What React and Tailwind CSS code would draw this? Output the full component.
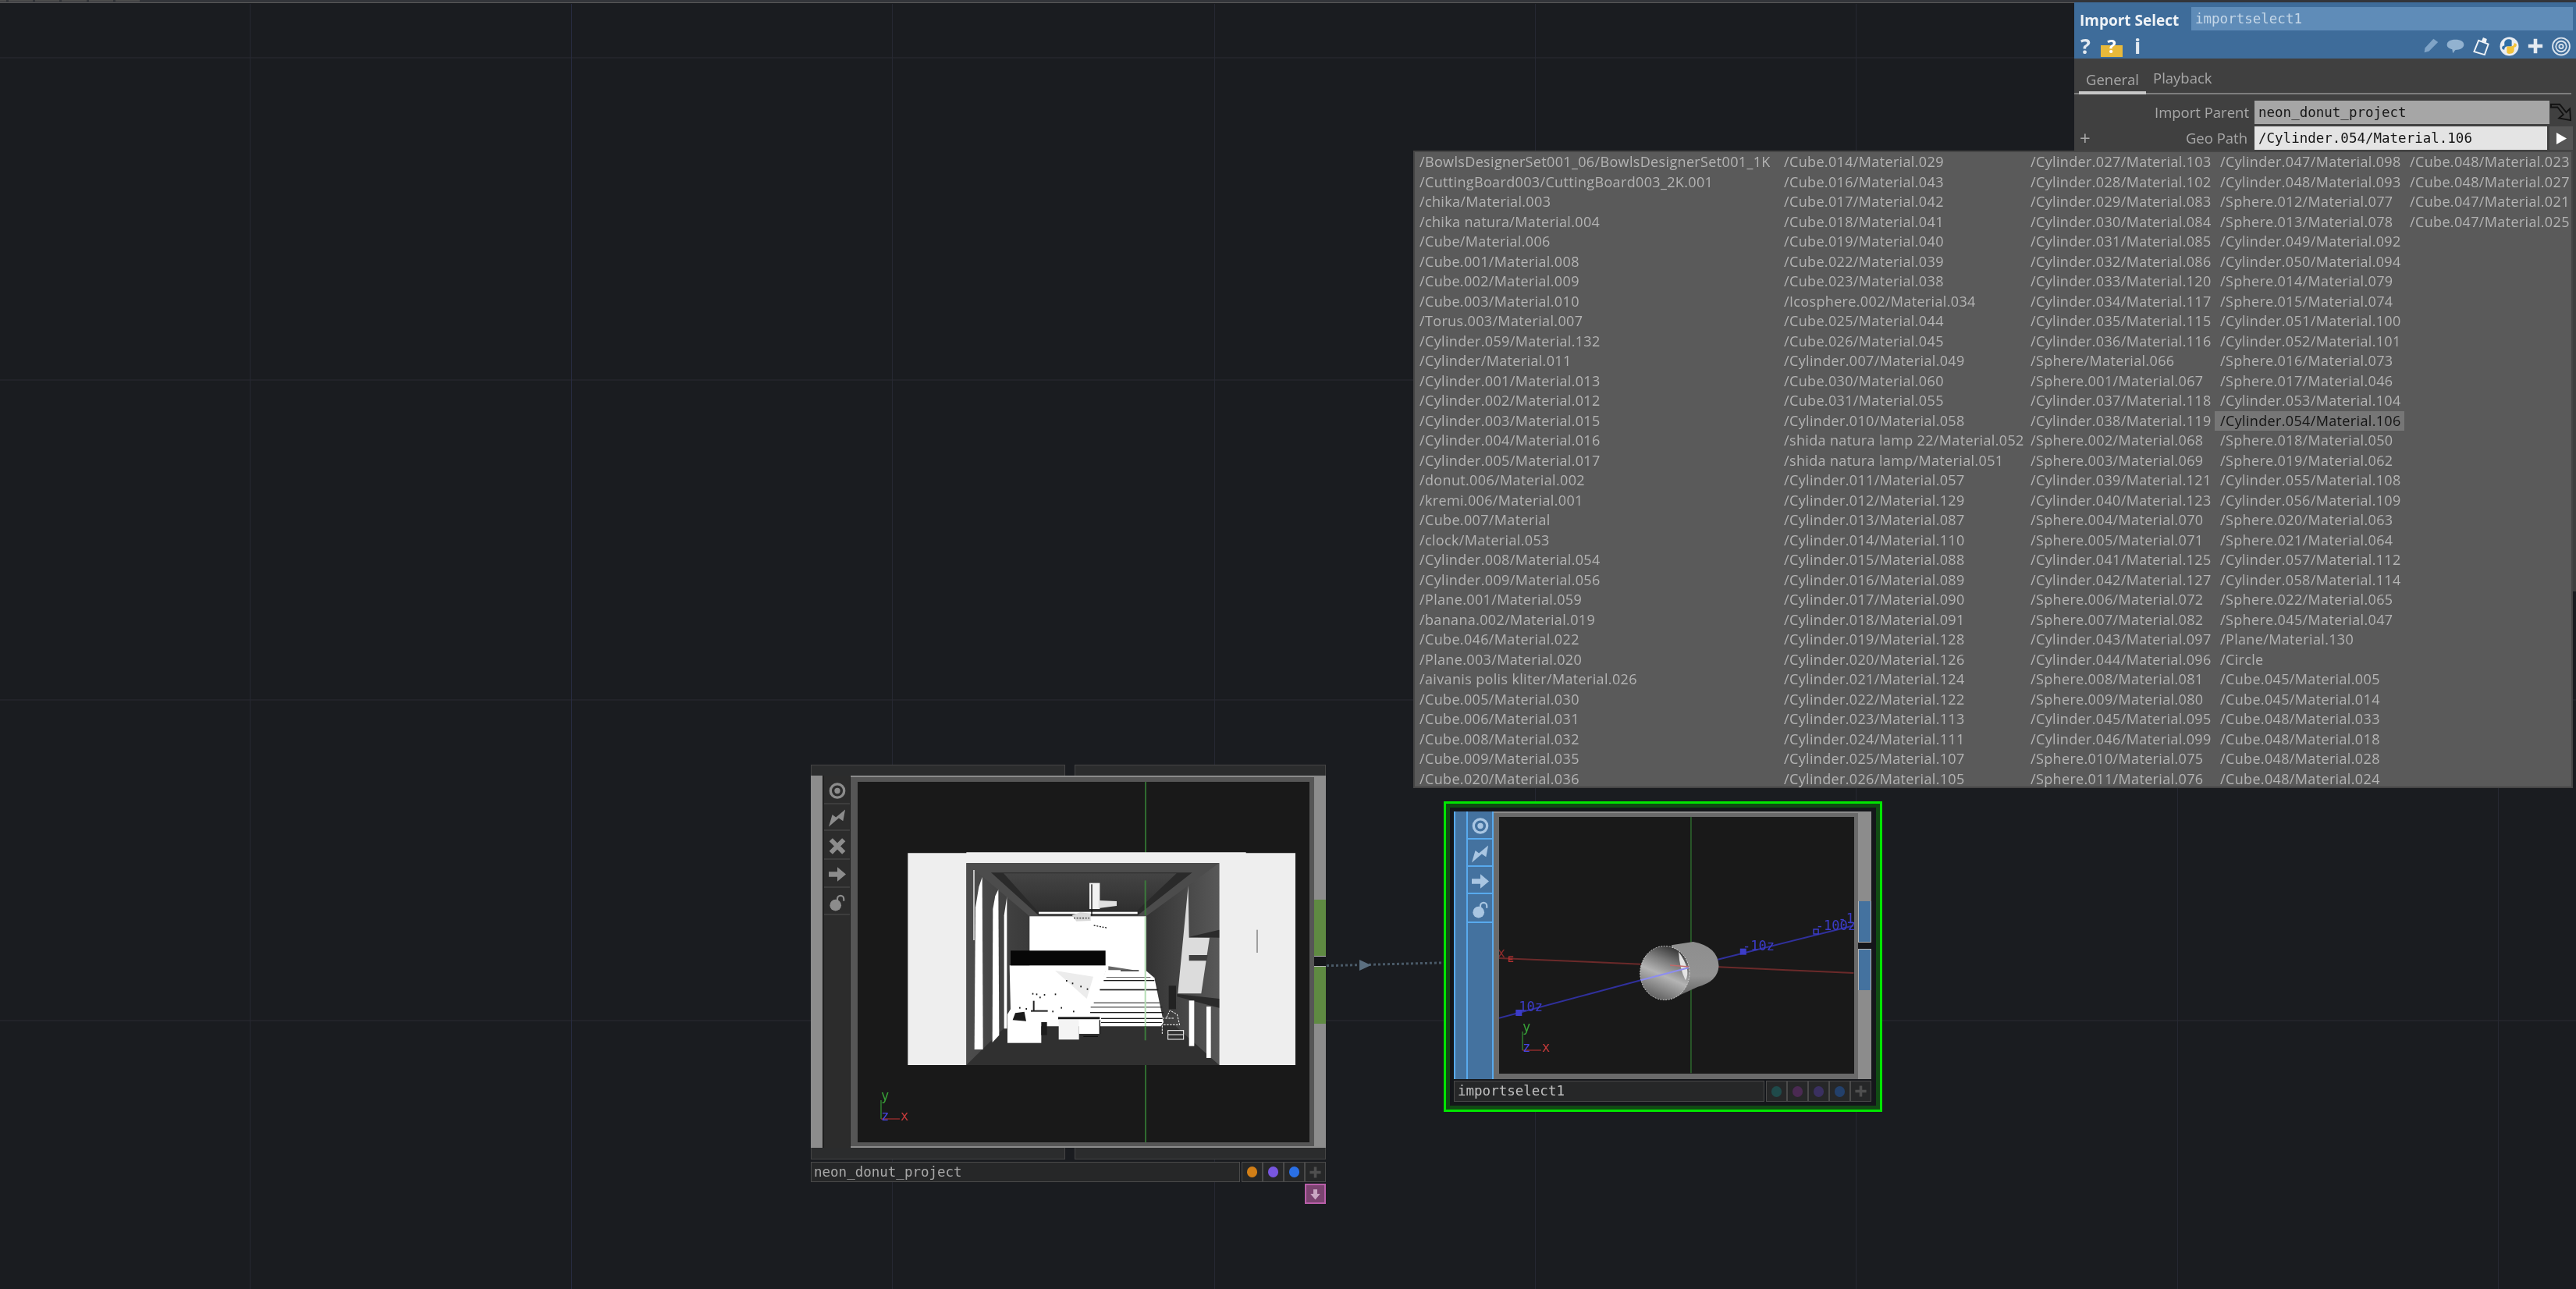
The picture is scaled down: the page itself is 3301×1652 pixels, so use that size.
import React from "react";

const SANS = "font-['Open_Sans',sans-serif]";
const MONO = "font-['DejaVu_Sans_Mono',monospace]";

const cyl = (n, m) => `/Cylinder.${n}/Material.${m}`;
const cub = (n, m) => `/Cube.${n}/Material.${m}`;
const sph = (n, m) => `/Sphere.${n}/Material.${m}`;

const COL1 = [
  "/BowlsDesignerSet001_06/BowlsDesignerSet001_1K", "/CuttingBoard003/CuttingBoard003_2K.001", "/chika/Material.003",
  "/chika natura/Material.004", "/Cube/Material.006", cub("001", "008"), cub("002", "009"), cub("003", "010"),
  "/Torus.003/Material.007", cyl("059", "132"), "/Cylinder/Material.011", cyl("001", "013"), cyl("002", "012"),
  cyl("003", "015"), cyl("004", "016"), cyl("005", "017"), "/donut.006/Material.002", "/kremi.006/Material.001",
  "/Cube.007/Material", "/clock/Material.053", cyl("008", "054"), cyl("009", "056"), "/Plane.001/Material.059",
  "/banana.002/Material.019", cub("046", "022"), "/Plane.003/Material.020", "/aivanis polis kliter/Material.026",
  cub("005", "030"), cub("006", "031"), cub("008", "032"), cub("009", "035"), cub("020", "036"),
];
const COL2 = [
  cub("014", "029"), cub("016", "043"), cub("017", "042"), cub("018", "041"), cub("019", "040"), cub("022", "039"),
  cub("023", "038"), "/Icosphere.002/Material.034", cub("025", "044"), cub("026", "045"), cyl("007", "049"),
  cub("030", "060"), cub("031", "055"), cyl("010", "058"), "/shida natura lamp 22/Material.052",
  "/shida natura lamp/Material.051", cyl("011", "057"), cyl("012", "129"), cyl("013", "087"), cyl("014", "110"),
  cyl("015", "088"), cyl("016", "089"), cyl("017", "090"), cyl("018", "091"), cyl("019", "128"), cyl("020", "126"),
  cyl("021", "124"), cyl("022", "122"), cyl("023", "113"), cyl("024", "111"), cyl("025", "107"), cyl("026", "105"),
];
const COL3 = [
  cyl("027", "103"), cyl("028", "102"), cyl("029", "083"), cyl("030", "084"), cyl("031", "085"), cyl("032", "086"),
  cyl("033", "120"), cyl("034", "117"), cyl("035", "115"), cyl("036", "116"), "/Sphere/Material.066", sph("001", "067"),
  cyl("037", "118"), cyl("038", "119"), sph("002", "068"), sph("003", "069"), cyl("039", "121"), cyl("040", "123"),
  sph("004", "070"), sph("005", "071"), cyl("041", "125"), cyl("042", "127"), sph("006", "072"), sph("007", "082"),
  cyl("043", "097"), cyl("044", "096"), sph("008", "081"), sph("009", "080"), cyl("045", "095"), cyl("046", "099"),
  sph("010", "075"), sph("011", "076"),
];
const COL4 = [
  cyl("047", "098"), cyl("048", "093"), sph("012", "077"), sph("013", "078"), cyl("049", "092"), cyl("050", "094"),
  sph("014", "079"), sph("015", "074"), cyl("051", "100"), cyl("052", "101"), sph("016", "073"), sph("017", "046"),
  cyl("053", "104"), cyl("054", "106"), sph("018", "050"), sph("019", "062"), cyl("055", "108"), cyl("056", "109"),
  sph("020", "063"), sph("021", "064"), cyl("057", "112"), cyl("058", "114"), sph("022", "065"), sph("045", "047"),
  "/Plane/Material.130", "/Circle", cub("045", "005"), cub("045", "014"), cub("048", "033"), cub("048", "018"),
  cub("048", "028"), cub("048", "024"),
];
const COL5 = [cub("048", "023"), cub("048", "027"), cub("047", "021"), cub("047", "025")];

const SELECTED = cyl("054", "106");

function MenuColumn({ items, className }) {
  return (
    <div className={`flex flex-col ${className}`}>
      {items.map((t) =>
        t === SELECTED ? (
          <div key={t} className="h-[25.5px] -ml-[7px] w-[243px] pl-[7px] flex items-center bg-[#767676] text-[#141414] whitespace-nowrap">{t}</div>
        ) : (
          <div key={t} className="h-[25.5px] flex items-center whitespace-nowrap">{t}</div>
        )
      )}
    </div>
  );
}

function TargetIcon({ className }) {
  return (
    <svg viewBox="0 0 24 24" className={className}>
      <circle cx="12" cy="12" r="9.5" fill="none" stroke="currentColor" strokeWidth="3.6" />
      <circle cx="12" cy="12" r="4" fill="currentColor" />
    </svg>
  );
}
function BoltIcon({ className }) {
  return (
    <svg viewBox="0 0 24 24" className={className}>
      <path d="M0 24 L5 7 L10 11 L23 0 L20 16 L14 12 Z" fill="currentColor" />
    </svg>
  );
}
function CrossIcon({ className }) {
  return (
    <svg viewBox="0 0 24 24" className={className}>
      <path d="M3 3 L21 21 M21 3 L3 21" stroke="currentColor" strokeWidth="6.5" fill="none" />
    </svg>
  );
}
function ArrowIcon({ className }) {
  return (
    <svg viewBox="0 0 24 24" className={className}>
      <path d="M0 8.5 H12 V2 L24 12 L12 22 V15.5 H0 Z" fill="currentColor" />
    </svg>
  );
}
function LockIcon({ className }) {
  return (
    <svg viewBox="0 0 24 24" className={className}>
      <path d="M12 11 V7 A4.5 4.5 0 0 1 21 7 V10" stroke="currentColor" strokeWidth="2.4" fill="none" />
      <circle cx="9.5" cy="16" r="8" fill="currentColor" />
    </svg>
  );
}
function PlusIcon({ className }) {
  return (
    <svg viewBox="0 0 24 24" className={className}>
      <path d="M12 2 V22 M2 12 H22" stroke="currentColor" strokeWidth="5" fill="none" />
    </svg>
  );
}

function RoomImage() {
  const stripes = [
    [790, 528, 195, 4], [775, 563, 225, 5], [752, 614, 253, 3], [740, 631, 275, 3], [738, 651, 282, 4], [780, 674, 240, 4], [780, 690, 235, 3], [800, 516, 170, 2],
  ];
  const dots = [
    [645, 528], [668, 538], [700, 550], [725, 560], [515, 578], [530, 580], [560, 582], [602, 580], [543, 592], [465, 632], [490, 636], [625, 632], [672, 646], [592, 646],
  ];
  return (
    <g transform="translate(52 78) scale(0.33333)">
      <defs>
        <linearGradient id="rw" x1="0" x2="1" y1="0" y2="0">
          <stop offset="0" stopColor="#333333" />
          <stop offset="1" stopColor="#585858" />
        </linearGradient>
        <linearGradient id="lw" x1="0" x2="1" y1="0" y2="0">
          <stop offset="0" stopColor="#4d4d4d" />
          <stop offset="1" stopColor="#3a3a3a" />
        </linearGradient>
        <linearGradient id="ce" x1="0" x2="0" y1="0" y2="1">
          <stop offset="0" stopColor="#444444" />
          <stop offset="1" stopColor="#2f2f2f" />
        </linearGradient>
      </defs>
      <path d="M37 40 H262 V37 H1337 V40 H1527 V855 H37 Z" fill="#eeeeee" />
      <rect x="262" y="78" width="972" height="777" fill="#4c4c4c" />
      <path d="M262 78 L505 283 V700 L262 855 Z" fill="url(#lw)" />
      <path d="M1234 78 L953 283 V700 L1234 855 Z" fill="url(#rw)" />
      <path d="M262 855 L420 700 H1060 L1234 855 Z" fill="#303030" />
      <path d="M357 115 H1130 L920 280 H540 Z" fill="#2a2a2a" />
      <path d="M405 118 H1070 L918 262 H535 Z" fill="url(#ce)" />
      <rect x="289" y="105" width="4" height="270" fill="#ffffff" />
      <path d="M297 250 L310 170 L323 132 L326 795 H293 Z" fill="#ffffff" />
      <path d="M364 255 L373 205 L385 180 L388 740 L362 768 Z" fill="#ffffff" />
      <path d="M407 280 L418 208 V715 H407 Z" fill="#ffffff" />
      <rect x="505" y="283" width="448" height="210" fill="#ffffff" />
      <rect x="540" y="266" width="380" height="8" fill="#ffffff" />
      <rect x="735" y="155" width="40" height="100" fill="#f2f2f2" />
      <rect x="742" y="160" width="4" height="120" fill="#111111" />
      <path d="M770 222 L840 225 V243 L770 252 Z" fill="#e0e0e0" />
      <path d="M668 278 L700 268 L740 272 V300 L685 302 Z" fill="#d8d8d8" />
      <path d="M675 290 H735 M752 318 L805 328" stroke="#222222" strokeWidth="4" strokeDasharray="6 5" fill="none" />
      <path d="M1115 165 L1075 580 H1165 L1197 365 H1118 Z" fill="#dcdcdc" />
      <path d="M1118 362 L1234 335 V365 Z" fill="#2b2b2b" />
      <path d="M1118 432 H1190 L1186 454 H1118 Z" fill="#3e3e3e" />
      <path d="M1072 582 L1234 600 V635 L1072 592 Z" fill="#2a2a2a" />
      <rect x="1118" y="607" width="20" height="175" fill="#ffffff" />
      <rect x="1185" y="630" width="17" height="198" fill="#ffffff" />
      <rect x="1040" y="550" width="28" height="90" fill="#222222" />
      <path d="M805 472 L950 490 L985 520 L1020 690 L1010 706 H720 L750 620 Z" fill="#ffffff" />
      <path d="M428 472 H805 L750 640 L720 706 H420 V660 L432 640 Z" fill="#ffffff" />
      <path d="M603 492 L750 515 L725 600 Z" fill="#ececec" />
      <path d="M808 475 L905 490 H808 Z" fill="#666666" />
      <rect x="855" y="490" width="70" height="4" fill="#111111" />
      {stripes.map(([x, y, w, h]) => (
        <rect key={y} x={x} y={y} width={w} height={h} fill="#1a1a1a" />
      ))}
      <rect x="432" y="415" width="365" height="57" fill="#070707" />
      <rect x="518" y="608" width="6" height="38" fill="#222222" />
      <rect x="510" y="644" width="65" height="6" fill="#222222" />
      <path d="M440 682 L450 655 L485 650 L492 686 Z" fill="#1b1b1b" />
      <rect x="615" y="670" width="160" height="9" fill="#1a1a1a" />
      <rect x="420" y="687" width="130" height="83" fill="#ffffff" />
      <rect x="550" y="690" width="22" height="50" fill="#1d1d1d" />
      <rect x="617" y="680" width="78" height="77" fill="#f4f4f4" />
      <rect x="695" y="680" width="80" height="55" fill="#ffffff" />
      <path d="M775 682 V735 M712 745 H768" stroke="#111111" strokeWidth="4" fill="none" />
      {dots.map(([x, y]) => (
        <rect key={`${x}-${y}`} x={x} y={y} width="5" height="6" fill="#1b1b1b" />
      ))}
      <rect x="1037" y="722" width="60" height="34" fill="none" stroke="#ffffff" strokeWidth="3" />
      <path d="M1037 738 H1095" stroke="#ffffff" strokeWidth="3" />
      <path d="M1015 735 V675 H1060 M1020 700 H1082 L1072 660 L1045 645 L1030 675" fill="none" stroke="#ffffff" strokeWidth="3" strokeDasharray="8 4" />
      <rect x="1378" y="335" width="4" height="88" fill="#777777" />
      <path d="M950 145 V280" stroke="#3c7a3c" strokeWidth="6" />
      <path d="M950 285 V705" stroke="#b5deb5" strokeWidth="6" />
      <path d="M950 705 V760" stroke="#3c7a3c" strokeWidth="6" />
    </g>
  );
}

function Axis({ x, y }) {
  return (
    <g transform={`translate(${x} ${y})`}>
      <path d="M0 0 V-24" stroke="#2f7d2f" strokeWidth="1.5" />
      <path d="M0 0 H24" stroke="#8c2b2b" strokeWidth="1.5" />
      <text x="0" y="-24" fontSize="17" fill="#37a037" className={MONO}>y</text>
      <text x="25" y="2" fontSize="17" fill="#c23a3a" className={MONO}>x</text>
      <text x="0" y="2" fontSize="17" fill="#4545e0" className={MONO}>z</text>
    </g>
  );
}

function Viewer1() {
  return (
    <svg viewBox="0 0 579 462" className="absolute inset-0 w-full h-full">
      <rect x="368" y="0" width="2" height="462" fill="#2f6a2f" />
      <RoomImage />
      <Axis x={30} y={432} />
    </svg>
  );
}

const X2 = (z) => (z - 256) / 2.529;
const Y2 = (z) => (z - 142) / 3;

function Viewer2() {
  const ln = (a, b, c, d, stroke, w = 1.5) => (
    <line x1={X2(a)} y1={Y2(b)} x2={X2(c)} y2={Y2(d)} stroke={stroke} strokeWidth={w} />
  );
  const lbl = (t, a, b, fill = "#3c3cc8") => (
    <text x={X2(a)} y={Y2(b)} fontSize="17" fill={fill} className={MONO}>{t}</text>
  );
  const box = (a, b) => <rect x={X2(a) - 4} y={Y2(b) - 4} width="8" height="8" fill="#3c3cc8" />;
  const body = `M${X2(815)} ${Y2(635)} L${X2(885)} ${Y2(622)} Q${X2(965)} ${Y2(640)} ${X2(968)} ${Y2(715)} Q${X2(965)} ${Y2(775)} ${X2(900)} ${Y2(795)} L${X2(815)} ${Y2(842)} Z`;
  return (
    <svg viewBox="0 0 455 329" className="absolute inset-0 w-full h-full">
      <defs>
        <linearGradient id="cf" x1="0.7" y1="0" x2="0.3" y2="1">
          <stop offset="0" stopColor="#2e2e2e" />
          <stop offset="0.3" stopColor="#7c7c7c" />
          <stop offset="0.55" stopColor="#b4b4b4" />
          <stop offset="1" stopColor="#5c5c5c" />
        </linearGradient>
        <linearGradient id="cb" x1="0" y1="0" x2="0" y2="1">
          <stop offset="0" stopColor="#8e8e8e" />
          <stop offset="0.6" stopColor="#939393" />
          <stop offset="1" stopColor="#5e5e5e" />
        </linearGradient>
      </defs>
      {ln(878, 142, 878, 1127, "#2f6a2f")}
      {ln(256, 685, 715, 708, "#6b2a2a", 2)}
      {ln(955, 718, 1405, 742, "#6b2a2a", 2)}
      {ln(256, 915, 715, 770, "#30309c", 2)}
      {ln(965, 690, 1405, 560, "#30309c", 2)}
      {box(320, 895)}
      {box(1047, 660)}
      <rect x={X2(1283) - 3} y={Y2(583) - 3} width="6" height="6" fill="none" stroke="#3c3cc8" strokeWidth="1.5" />
      <path d={`M${X2(302)} ${Y2(680)} H${X2(288)} V${Y2(698)} H${X2(302)} M${X2(288)} ${Y2(689)} H${X2(300)}`} fill="none" stroke="#b03030" strokeWidth="1.5" />
      {lbl("x", 250, 683, "#8c2b2b")}
      {lbl("10z", 320, 888)}
      {lbl("-10z", 1045, 655)}
      {lbl("-100z", 1282, 578)}
      {lbl("-1", 1355, 550)}
      <path d={body} fill="url(#cb)" />
      <ellipse cx={X2(793)} cy={Y2(742)} rx={80 / 2.529} ry={34.5} fill="url(#cf)" stroke="#d8d8d8" strokeWidth="1" strokeDasharray="2 1.5" />
      <path d={`M${X2(838)} ${Y2(660)} Q${X2(880)} ${Y2(730)} ${X2(860)} ${Y2(770)} Q${X2(840)} ${Y2(720)} ${X2(838)} ${Y2(660)} Z`} fill="#e4e4e4" />
      {ln(715, 770, 870, 722, "#8d8df0", 2)}
      {ln(810, 712, 870, 718, "#c06a6a", 1.5)}
      <Axis x={X2(332) | 0} y={(Y2(1040) | 0)} />
    </svg>
  );
}

function IconCol({ rows, light, heights }) {
  const wrap = light
    ? "bg-[#44729f] border-x-2 border-[#58aaee] text-[#a9c6e2]"
    : "bg-[#2c2c2c] border-x border-[#1f1f1f] text-[#8c8c8c]";
  const cell = light ? "border-b-2 border-[#58aaee]" : "border-b-2 border-[#3d3d3d]";
  return (
    <div className={`flex flex-col ${wrap} w-[35px] shrink-0`}>
      {rows.map((Icon, i) => (
        <div key={i} className={`${heights[i]} shrink-0 pt-[3px] flex items-center justify-center ${cell}`}>
          <Icon className="w-[22px] h-[23px]" />
        </div>
      ))}
    </div>
  );
}

function NodeButton({ dot }) {
  return (
    <div className="w-[27px] h-full bg-[#262728] border border-[#4a4a4a] flex items-center justify-center">
      <div className={`w-[13px] h-[14px] rounded-full ${dot}`} />
    </div>
  );
}
function NodePlus() {
  return (
    <div className="w-[27px] h-full bg-[#262728] border border-[#4a4a4a] flex items-center justify-center text-[#4f4f4f]">
      <PlusIcon className="w-[17px] h-[17px]" />
    </div>
  );
}

function Node1() {
  return (
    <div className="absolute left-[1039px] top-[980px] w-[660px] flex flex-col">
      <div className="flex justify-between h-[14px]">
        <div className="w-[326px] bg-[#2b2c2d] border border-[#454545] border-b-0" />
        <div className="w-[322px] bg-[#2b2c2d] border border-[#454545] border-b-0" />
      </div>
      <div className="flex h-[477px]">
        <div className="w-[15px] bg-[#8c8c8c] shrink-0" />
        <div className="w-px bg-[#1b1b1b] shrink-0" />
        <IconCol
          rows={[TargetIcon, BoltIcon, CrossIcon, ArrowIcon, LockIcon]}
          heights={["h-[37px]", "h-[34px]", "h-[37px]", "h-[36px]", "h-[35px]"]}
        />
        <div className="w-[594px] shrink-0 bg-[#565656] border-t-2 border-b-2 border-[#8c8c8c] pl-[9px] pr-[6px] pt-[6px] pb-[5px]">
          <div className="relative w-[579px] h-[462px] bg-[#191919]">
            <Viewer1 />
          </div>
        </div>
        <div className="w-[15px] shrink-0 bg-[#8c8c8c] flex flex-col">
          <div className="h-[159px]" />
          <div className="h-[73px] bg-[#5f8a42] border-b border-[#b5b5b5]" />
          <div className="h-[12px] bg-[#15161a]" />
          <div className="h-[74px] bg-[#5f8a42] border-t border-[#b5b5b5]" />
        </div>
      </div>
      <div className="flex justify-between h-[15px]">
        <div className="w-[326px] bg-[#2b2c2d] border border-[#454545] border-t-0" />
        <div className="w-[322px] bg-[#2b2c2d] border border-[#454545] border-t-0" />
      </div>
      <div className="flex justify-between h-[26px] mt-[3px]">
        <div className={`w-[550px] bg-[#262728] border border-[#4a4a4a] flex items-center pl-[3px] text-[17.5px] text-[#a8a8a8] ${MONO}`}>neon_donut_project</div>
        <div className="flex w-[108px]">
          <NodeButton dot="bg-[#d27f17]" />
          <NodeButton dot="bg-[#7856e0]" />
          <NodeButton dot="bg-[#2a70e6]" />
          <NodePlus />
        </div>
      </div>
      <div className="self-end mt-[2px] w-[27px] h-[26px] bg-[#7b4470] border-2 border-[#b85ea8] flex items-center justify-center text-[#c9a6c2]">
        <svg viewBox="0 0 24 24" className="w-[15px] h-[17px]">
          <path d="M8 2 H16 V11 H22 L12 23 L2 11 H8 Z" fill="currentColor" />
        </svg>
      </div>
    </div>
  );
}

function Node2() {
  return (
    <div className="absolute left-[1850px] top-[1027px] w-[562px] h-[398px] border-[3px] border-[#00e600] bg-[#114a14] p-[5px]">
      <div className="w-full h-full bg-[#14161a] pl-[5px] pt-[5px] pr-[3px] flex flex-col">
        <div className="flex h-[343px] w-[535px]">
          <div className="w-[16px] shrink-0 bg-[#44729f] border-x-2 border-[#58aaee] border-r-0" />
          <IconCol
            light
            rows={[TargetIcon, BoltIcon, ArrowIcon, LockIcon]}
            heights={["h-[36px]", "h-[35px]", "h-[35px]", "h-[37px]"]}
          />
          <div className="w-[467px] shrink-0 bg-[#6a6a6a] border-t-2 border-[#8c8c8c] pl-[7px] pr-[5px] pt-[5px] pb-[7px]">
            <div className="relative w-[455px] h-[329px] bg-[#191919]">
              <Viewer2 />
            </div>
          </div>
          <div className="w-[17px] shrink-0 bg-[#8c8c8c] flex flex-col">
            <div className="h-[115px]" />
            <div className="h-[53px] bg-[#44729f] border border-[#b5b5b5] border-t-0" />
            <div className="h-[8px] bg-[#15161a]" />
            <div className="h-[53px] bg-[#44729f] border border-[#b5b5b5] border-b-0" />
          </div>
        </div>
        <div className="flex justify-between h-[27px] mt-[2px] w-[535px]">
          <div className={`w-[398px] bg-[#262728] border border-[#4a4a4a] flex items-center pl-[4px] text-[17.5px] text-[#c0c0c0] ${MONO}`}>importselect1</div>
          <div className="flex w-[135px]">
            <NodeButton dot="bg-[#1f4a4a]" />
            <NodeButton dot="bg-[#4a2a52]" />
            <NodeButton dot="bg-[#3a3060]" />
            <NodeButton dot="bg-[#23406a]" />
            <NodePlus />
          </div>
        </div>
      </div>
    </div>
  );
}

function Wire() {
  return (
    <svg className="absolute left-[1680px] top-[1220px] w-[260px] h-[30px]" viewBox="0 0 260 30">
      <line x1="8" y1="18" x2="242" y2="12" stroke="#4a5a68" strokeWidth="3" strokeDasharray="3 3" />
      <path d="M62 10 L77 17 L62 24 Z" fill="#5b6f80" />
    </svg>
  );
}

function ParamPanel() {
  return (
    <div className={`absolute left-[2658px] top-[3px] right-0 h-[755px] bg-[#404040] ${SANS}`}>
      <div className="h-[72px] bg-[#3e6c9a] relative flex flex-col">
        <div className="flex h-[42px] pt-[6px] pl-[7px]">
          <div className="w-[143px] font-bold text-[#eef2f6] text-[19px] leading-[34px] whitespace-nowrap">Import Select</div>
          <div className={`w-[489px] h-[30px] bg-[#5f8cb8] text-[#c5d7e8] text-[17.5px] leading-[30px] pl-[5px] ${MONO}`}>importselect1</div>
        </div>
        <div className="flex items-center justify-between h-[28px] pl-[8px] pr-[6px]">
          <div className="flex items-center">
            <span className="font-bold text-[#e2e9f0] text-[27px] leading-[28px] w-[26px]">?</span>
            <span className="relative w-[28px] h-[27px] bg-[linear-gradient(#3e6c9a_45%,#e8b93a_45%)] flex items-center justify-center font-bold text-white text-[24px] leading-[26px]">?</span>
            <span className="font-bold text-[#e2e9f0] text-[27px] leading-[28px] ml-[15px]">i</span>
          </div>
          <div className="flex items-center gap-[9px]">
            <svg viewBox="0 0 24 24" className="w-[20px] h-[24px] text-[#7fa3c6]">
              <path d="M2 22 L3 15 L16 1 L23 6 L9 20 Z" fill="currentColor" />
            </svg>
            <svg viewBox="0 0 28 24" className="w-[25px] h-[20px] text-[#92b2d0]">
              <path d="M14 2 C22 2 27 5 27 10 C27 15 21 18 14 18 L10 23 L9 17 C4 16 1 14 1 10 C1 5 6 2 14 2 Z" fill="currentColor" />
            </svg>
            <svg viewBox="0 0 26 26" className="w-[26px] h-[25px] text-[#f0f4f8]">
              <path d="M8 5 L21 10 L16 24 L2 20 Z" fill="none" stroke="currentColor" strokeWidth="2" />
              <path d="M12 6 L14 1 L19 3 L18 8 Z" fill="currentColor" />
            </svg>
            <svg viewBox="0 0 24 24" className="w-[25px] h-[25px]">
              <circle cx="12" cy="12" r="11.5" fill="#e9edf2" />
              <path d="M12 3 C8 3 6 5 6 8 V11 C4 11 3 12 3 14 C3 15 4 16 6 16 C6 14 7 12 10 12 H15 V5 C15 4 14 3 12 3 Z" fill="#2f6ea6" />
              <path d="M12 21 C16 21 18 19 18 16 V13 C20 13 21 12 21 10 C21 9 20 8 18 8 C18 10 17 12 14 12 H9 V19 C9 20 10 21 12 21 Z" fill="#f2c33a" />
            </svg>
            <PlusIcon className="w-[22px] h-[22px] text-[#e6ebf1] ml-[1px]" />
            <svg viewBox="0 0 24 24" className="w-[26px] h-[25px] text-[#d8e2ec]">
              <circle cx="12" cy="12" r="10.5" fill="none" stroke="currentColor" strokeWidth="1.8" />
              <circle cx="12" cy="12" r="6.5" fill="none" stroke="currentColor" strokeWidth="1.8" />
              <circle cx="12" cy="12" r="2.5" fill="none" stroke="currentColor" strokeWidth="1.8" />
            </svg>
          </div>
        </div>
      </div>
      <div className="relative h-[46px] pl-[6px] flex items-end border-b-2 border-[#7d7d7d] mr-[6px]">
        <div className="w-[86px] h-[37px] pt-[3px] border-b-[4px] border-[#c8c8c8] -mb-[2px] text-center text-[#a8a8a8] text-[18.5px] leading-[30px]">General</div>
        <div className="ml-[9px] h-[37px] pt-[3px] text-[#a8a8a8] text-[18.5px] leading-[30px]">Playback</div>
      </div>
      <div className="flex items-center h-[30px] mt-[8px]">
        <div className="w-[224px] text-right text-[#a8a8a8] text-[18.5px] whitespace-nowrap">Import Parent</div>
        <div className={`ml-[7px] w-[378px] h-[30px] bg-[#a6a6a6] text-[#161616] text-[17.5px] leading-[30px] pl-[5px] ${MONO}`}>neon_donut_project</div>
        <svg viewBox="0 0 30 28" className="w-[30px] h-[26px] text-[#111111]">
          <path d="M1 3 H13 L22 14 L27 9 L28 25 L12 22 L18 17 L10 7 H1 Z" fill="none" stroke="currentColor" strokeWidth="2" />
        </svg>
      </div>
      <div className="flex items-center h-[30px] mt-[3px]">
        <span className="w-[32px] pl-[7px] text-[#a8a8a8] text-[24px] leading-[24px]">+</span>
        <div className="w-[190px] text-right text-[#a8a8a8] text-[18.5px] whitespace-nowrap">Geo Path</div>
        <div className={`ml-[9px] w-[375px] h-[30px] bg-[#e4e4e4] text-[#161616] text-[17.5px] leading-[30px] pl-[5px] ${MONO}`}>/Cylinder.054/Material.106</div>
        <div className="ml-[3px] w-[30px] h-[30px] bg-[#555555] flex items-center justify-center">
          <svg viewBox="0 0 16 18" className="w-[15px] h-[17px]">
            <path d="M1 1 L15 9 L1 17 Z" fill="#ffffff" />
          </svg>
        </div>
      </div>
    </div>
  );
}

function Menu() {
  return (
    <div className={`absolute left-[1811px] top-[193px] w-[1486px] h-[817px] bg-[#5a5a5a] border-2 border-[#464646] pl-[6px] flex text-[#b4b4b4] text-[18px] tracking-[0.35px] ${SANS}`}>
      <MenuColumn items={COL1} className="w-[467px] shrink-0" />
      <MenuColumn items={COL2} className="w-[316px] shrink-0" />
      <MenuColumn items={COL3} className="w-[243px] shrink-0" />
      <MenuColumn items={COL4} className="w-[243px] shrink-0" />
      <MenuColumn items={COL5} className="w-[200px] shrink-0" />
    </div>
  );
}

const VLINES = [
  "left-[320px] bg-[#262832]", "left-[732px] bg-[#282c42]", "left-[1143px] bg-[#262832]", "left-[1556px] bg-[#262832]",
  "left-[1967px] bg-[#262832]", "left-[2378px] bg-[#262832]", "left-[2790px] bg-[#262832]", "left-[3201px] bg-[#262832]",
];
const HLINES = ["top-[73px]", "top-[486px]", "top-[896px]", "top-[1307px]"];
const TABS = ["w-[8px]", "w-[31px]", "w-[31px]", "w-[32px]", "w-[31px]", "w-[31px]"];

export default function App() {
  return (
    <div className="relative w-[3301px] h-[1652px] overflow-hidden bg-[#1a1c20] blur-[0.5px]">
      {HLINES.map((c) => (
        <div key={c} className={`absolute left-0 right-0 h-[2px] bg-[#222329] ${c}`} />
      ))}
      {VLINES.map((c) => (
        <div key={c} className={`absolute top-[5px] bottom-0 w-px ${c}`} />
      ))}
      <div className="absolute top-0 left-0 right-0 h-[4px] bg-[#33353a] border-b border-[#5a5a5a]">
        <div className="flex gap-[3px]">
          {TABS.map((c, i) => (
            <div key={i} className={`h-[2px] bg-[#4d4d4d] ${c}`} />
          ))}
        </div>
      </div>
      <Wire />
      <Node1 />
      <Node2 />
      <ParamPanel />
      <Menu />
    </div>
  );
}
